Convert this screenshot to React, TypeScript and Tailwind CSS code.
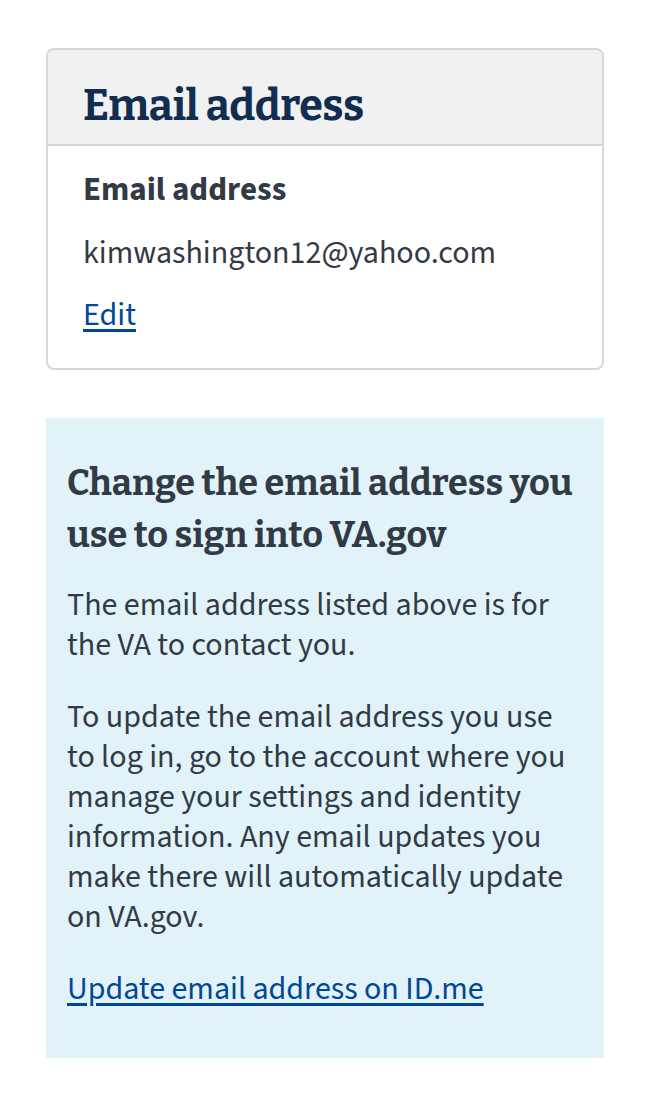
export default function App() {
  const body = { fontFamily: '"Source Sans Pro", "Source Sans 3", Lato, "Noto Sans", sans-serif' };
  const serif = { fontFamily: 'Bitter, "DejaVu Serif", serif' };

  return (
    <div className="min-h-[1100px] bg-white pl-[46px] pr-[50px] pt-[48px]" style={body}>
      <section className="w-[558px] overflow-hidden rounded-[8px] border-2 border-[#d6d7d9]">
        <div className="flex h-[96px] items-center border-b-2 border-[#d6d7d9] bg-[#f1f1f1] px-[35px] pt-[16px]">
          <h2 className="text-[43px] font-bold leading-none tracking-[-0.5px] text-[#112e51]" style={serif}>
            Email address
          </h2>
        </div>
        <div className="px-[35px] pb-[33px] pt-[24px] text-[32px] text-[#323a45]">
          <h3 className="text-[33px] font-bold leading-[40px]">Email address</h3>
          <p className="mt-[23px] leading-[40px]">kimwashington12@yahoo.com</p>
          <a href="#" className="mt-[22px] block w-fit leading-[40px] text-[#004795] underline underline-offset-[4px]">
            Edit
          </a>
        </div>
      </section>

      <section className="mt-[48px] w-[558px] bg-[#e1f3f8] px-[21px] pb-[49px] pt-[39px] text-[#323a45]">
        <h3 className="text-[36px] font-bold leading-[52px]" style={serif}>
          Change the email address you use to sign into VA.gov
        </h3>
        <p className="mt-[24px] text-[32px] leading-[40px]">
          The email address listed above is for the VA to contact you.
        </p>
        <p className="mt-[32px] text-[32px] leading-[40px]">
          To update the email address you use to log in, go to the account where you manage your
          settings and identity information. Any email updates you make there will automatically
          update on VA.gov.
        </p>
        <a href="#" className="mt-[32px] block w-fit text-[32px] leading-[40px] text-[#004795] underline underline-offset-[4px]">
          Update email address on ID.me
        </a>
      </section>
    </div>
  );
}
